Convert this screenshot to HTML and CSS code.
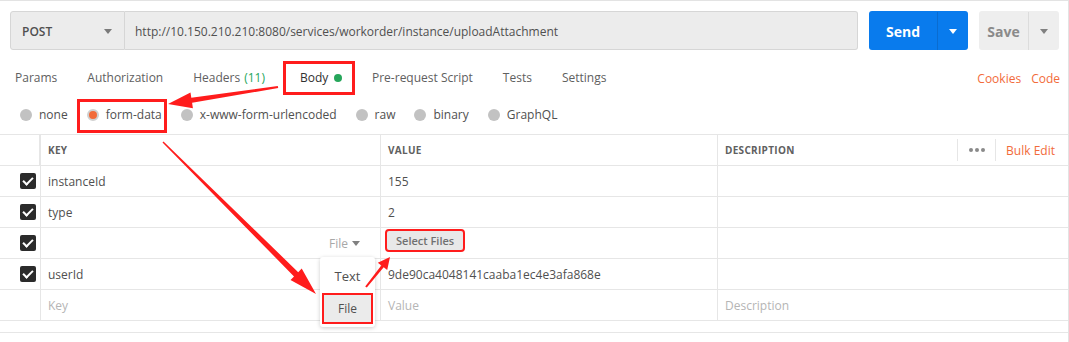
FILE: index.html
```html
<!DOCTYPE html>
<html lang="en">
<head>
    <meta charset="UTF-8">
    <title>POST uploadAttachment</title>
    <link rel="stylesheet" href="styles.css">
</head>
<body>
<div class="app">

    <!-- Request bar -->
    <div class="request-bar">
        <div class="method">
            <span>POST</span>
            <span class="caret caret-dark"></span>
        </div>
        <div class="url">http://10.150.210.210:8080/services/workorder/instance/uploadAttachment</div>
        <div class="btn-send">
            <span class="btn-label">Send</span>
            <span class="btn-drop"><span class="caret caret-white"></span></span>
        </div>
        <div class="btn-save">
            <span class="btn-label">Save</span>
            <span class="btn-drop"><span class="caret caret-gray"></span></span>
        </div>
    </div>

    <!-- Tabs -->
    <div class="tabs">
        <div class="tab">Params</div>
        <div class="tab">Authorization</div>
        <div class="tab">Headers <span class="count">(11)</span></div>
        <div class="tab tab-active marked">Body <span class="dot"></span></div>
        <div class="tab">Pre-request Script</div>
        <div class="tab">Tests</div>
        <div class="tab">Settings</div>
        <div class="tab-links">
            <span>Cookies</span>
            <span>Code</span>
        </div>
    </div>

    <!-- Body modes -->
    <div class="modes">
        <label class="mode"><span class="radio"></span>none</label>
        <label class="mode mode-on marked"><span class="radio"></span>form-data</label>
        <label class="mode"><span class="radio"></span>x-www-form-urlencoded</label>
        <label class="mode"><span class="radio"></span>raw</label>
        <label class="mode"><span class="radio"></span>binary</label>
        <label class="mode"><span class="radio"></span>GraphQL</label>
    </div>

    <!-- Params table -->
    <div class="kv-table">
        <div class="kv-row kv-head">
            <div class="cell"></div>
            <div class="cell">KEY</div>
            <div class="cell">VALUE</div>
            <div class="cell cell-desc">
                <span>DESCRIPTION</span>
                <div class="head-tools">
                    <span class="dots"><i></i><i></i><i></i></span>
                    <span class="bulk">Bulk Edit</span>
                </div>
            </div>
        </div>
        <div class="kv-row">
            <div class="cell cell-check"><span class="check"></span></div>
            <div class="cell">instanceId</div>
            <div class="cell">155</div>
            <div class="cell"></div>
        </div>
        <div class="kv-row">
            <div class="cell cell-check"><span class="check"></span></div>
            <div class="cell">type</div>
            <div class="cell">2</div>
            <div class="cell"></div>
        </div>
        <div class="kv-row">
            <div class="cell cell-check"><span class="check"></span></div>
            <div class="cell cell-type"><span class="type-pick">File <span class="caret caret-gray"></span></span></div>
            <div class="cell"><span class="select-files marked-sm">Select Files</span></div>
            <div class="cell"></div>
        </div>
        <div class="kv-row">
            <div class="cell cell-check"><span class="check"></span></div>
            <div class="cell">userId</div>
            <div class="cell">9de90ca4048141caaba1ec4e3afa868e</div>
            <div class="cell"></div>
        </div>
        <div class="kv-row kv-empty">
            <div class="cell"></div>
            <div class="cell">Key</div>
            <div class="cell">Value</div>
            <div class="cell">Description</div>
        </div>
    </div>
    <div class="footer-line"></div>

    <!-- Type dropdown -->
    <div class="type-menu">
        <div class="menu-item">Text</div>
        <div class="menu-item menu-item-on marked-sm">File</div>
    </div>

    <!-- Annotation arrows -->
    <svg class="arrows" width="1069" height="342" viewBox="0 0 1069 342">
        <polygon points="277.8,86 191.3,97.8 190.5,92.4 168,104 192.9,108.2 192.1,102.8 278.2,88"/>
        <polygon points="163.5,141.5 298.2,272.2 301.7,268.6 316,294 290.5,280 294,276.4 162.5,142.5"/>
        <polygon points="366.8,287.6 383.7,267.3 387.2,270.1 390,257 377.8,262.7 381.3,265.5 365.2,286.4"/>
    </svg>
</div>
</body>
</html>
```

FILE: styles.css
```css
body {
    margin: 0;
    font-family: "Open Sans", "Liberation Sans", sans-serif;
    font-size: 12px;
    color: #505050;
    background-color: #fff;
}
.app {
    position: relative;
    width: 1069px;
    height: 342px;
    box-sizing: border-box;
    border-top: 1px solid #e3e3e3;
    border-right: 1px solid #e3e3e3;
    overflow: hidden;
}
/* Request bar */
.request-bar {
    display: flex;
    padding: 10px 9px 0 10px;
    height: 39px;
}
.method {
    width: 115px;
    box-sizing: border-box;
    display: flex;
    align-items: center;
    justify-content: space-between;
    padding: 0 12px 0 11px;
    background-color: #ececec;
    border: 1px solid #d6d6d6;
    border-radius: 3px 0 0 3px;
    font-weight: 600;
    color: #505050;
}
.url {
    width: 733px;
    box-sizing: border-box;
    display: flex;
    align-items: center;
    padding-left: 10px;
    background-color: #ececec;
    border: 1px solid #d6d6d6;
    border-left: none;
    border-radius: 0 3px 3px 0;
    color: #505050;
}
.request-bar > div {
    padding-top: 1px;
}
.btn-send, .btn-save {
    display: flex;
    border-radius: 3px;
    margin-left: 11px;
    font-size: 14px;
    font-weight: 700;
}
.btn-send {
    width: 99px;
    background-color: #097bed;
    color: #fff;
}
.btn-save {
    width: 80px;
    background-color: #eeeeee;
    color: #8a8a8a;
}
.btn-label {
    flex: 1;
    display: flex;
    align-items: center;
    justify-content: center;
}
.btn-drop {
    width: 30px;
    display: flex;
    align-items: center;
    justify-content: center;
}
.btn-send .btn-drop {
    border-left: 1px solid #0a6cd0;
}
.btn-save .btn-drop {
    border-left: 1px solid #dcdcdc;
}
.caret {
    display: inline-block;
    width: 0;
    height: 0;
    border-left: 4px solid transparent;
    border-right: 4px solid transparent;
    border-top: 5px solid #808080;
}
.caret-dark { border-top-color: #7a7a7a; }
.caret-white { border-top-color: #fff; }
.caret-gray { border-top-color: #808080; }
/* Tabs */
.tabs {
    display: flex;
    align-items: center;
    margin-top: 12px;
    height: 32px;
}
.tab {
    padding: 0 15px;
    line-height: 32px;
    height: 32px;
    color: #606060;
    display: flex;
    align-items: center;
    gap: 6px;
    box-sizing: border-box;
    flex-shrink: 0;
}
.tab-active {
    color: #303030;
    margin: 0 3px 0 4px;
    padding: 0 12px 0 16px;
    width: 70px;
}
.count {
    color: #26a65b;
    margin-left: -2px;
}
.dot {
    flex-shrink: 0;
    width: 8px;
    height: 8px;
    border-radius: 50%;
    background-color: #26a65b;
}
.tab-links {
    margin-left: auto;
    padding-right: 8px;
    display: flex;
    gap: 10px;
    color: #f26b3a;
}
.marked {
    outline: 3px solid #ff1c1c;
    outline-offset: -2px;
}
.marked-sm {
    outline: 2.5px solid #ff1c1c;
    outline-offset: 0;
}
/* Modes */
.modes {
    display: flex;
    margin-top: 6px;
    height: 32px;
    padding-left: 11px;
}
.mode {
    display: flex;
    align-items: center;
    gap: 7px;
    padding: 0 9px 3px;
    margin-right: 1px;
    color: #505050;
}
.mode-on {
    padding-right: 4px;
    margin-right: 6px;
}
.radio {
    width: 12px;
    height: 12px;
    border-radius: 50%;
    background-color: #c2c2c2;
    box-sizing: border-box;
}
.mode-on .radio {
    background-color: #f26b3a;
    border: 2px solid #d0d0d0;
}
/* Table */
.kv-table {
    margin-top: 2px;
    border-bottom: 1px solid #e6e6e6;
}
.kv-row {
    display: grid;
    grid-template-columns: 40px 340px 337px 1fr;
    height: 31px;
    box-sizing: border-box;
    border-top: 1px solid #e6e6e6;
}
.cell {
    display: flex;
    align-items: center;
    padding-left: 7px;
    border-left: 1px solid #e6e6e6;
    color: #505050;
}
.cell:first-child {
    border-left: none;
}
.kv-head .cell {
    font-size: 10px;
    font-weight: 700;
    color: #606060;
    letter-spacing: 0.3px;
}
.kv-head .cell:first-child {
    border-right: 1px solid #e6e6e6;
}
.cell-desc {
    justify-content: space-between;
}
.head-tools {
    display: flex;
    align-items: center;
    height: 22px;
}
.dots {
    display: flex;
    gap: 2px;
    align-items: center;
    padding: 0 10px 0 11px;
    height: 22px;
    border-left: 1px solid #e6e6e6;
    border-right: 1px solid #e6e6e6;
}
.dots i {
    width: 4px;
    height: 4px;
    border-radius: 50%;
    background-color: #8a8a8a;
}
.bulk {
    font-size: 12px;
    font-weight: 400;
    color: #f26b3a;
    padding: 0 13px 0 10px;
    letter-spacing: 0;
}
.cell-check {
    justify-content: flex-start;
    padding-left: 20px;
}
.check {
    width: 16px;
    height: 16px;
    border-radius: 2px;
    background-color: #2b2b2b;
    position: relative;
}
.check::after {
    content: "";
    position: absolute;
    left: 5px;
    top: 2px;
    width: 4px;
    height: 8px;
    border-right: 2px solid #fff;
    border-bottom: 2px solid #fff;
    transform: rotate(45deg);
}
.cell-type {
    justify-content: flex-end;
    padding-right: 20px;
}
.type-pick {
    color: #a8a8a8;
    display: flex;
    align-items: center;
    gap: 4px;
}
.select-files {
    align-self: flex-start;
    margin: 3px 0 0 -1px;
    background-color: #e8e8e8;
    color: #707070;
    font-size: 11px;
    font-weight: 600;
    line-height: 15px;
    padding: 2px 9px;
    border-radius: 2px;
}
.kv-empty .cell {
    color: #b5b5b5;
}
.footer-line {
    margin-top: 11px;
    border-top: 1px solid #e6e6e6;
}
/* Type menu */
.type-menu {
    position: absolute;
    left: 320px;
    top: 256px;
    width: 55px;
    padding: 5px 4px;
    box-sizing: border-box;
    background-color: #fff;
    border-radius: 3px;
    box-shadow: 0 1px 4px rgba(0, 0, 0, 0.2);
}
.menu-item {
    height: 28px;
    display: flex;
    align-items: center;
    justify-content: center;
    color: #505050;
    font-size: 13px;
}
.menu-item-on {
    background-color: #ebebeb;
    margin-top: 5px;
    height: 27px;
    font-size: 12px;
}
/* Arrows */
.arrows {
    position: absolute;
    left: 0;
    top: -1px;
    pointer-events: none;
}
.arrows polygon {
    fill: #ff1c1c;
}
```
